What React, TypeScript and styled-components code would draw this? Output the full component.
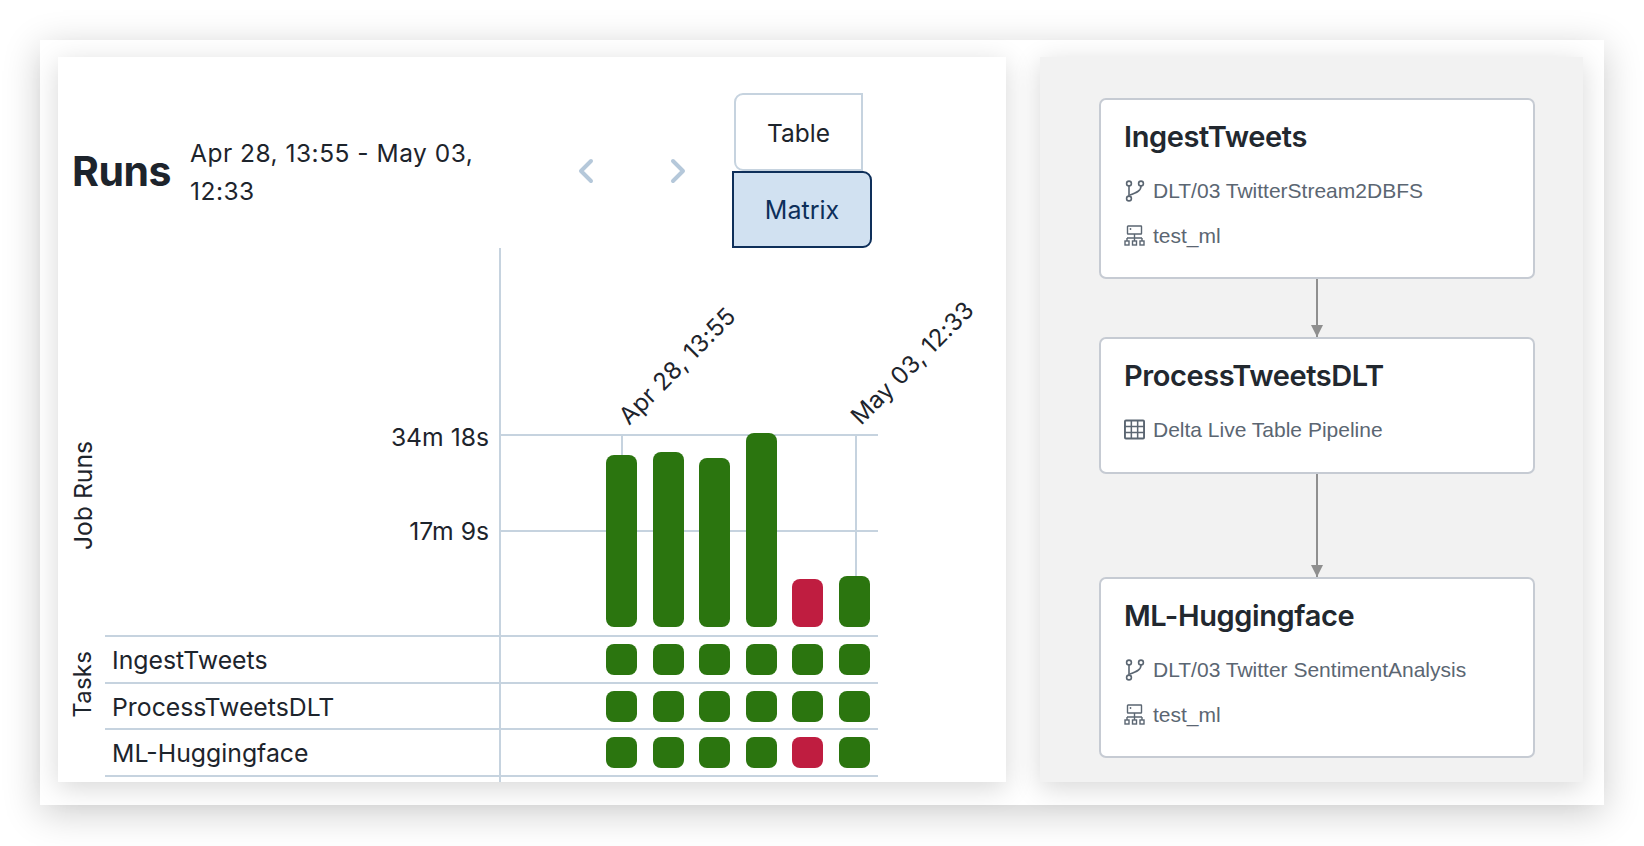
import React from "react";
import styled, { createGlobalStyle } from "styled-components";
import { ChevronLeft, ChevronRight } from "lucide-react";

const Global = createGlobalStyle`
  html, body { margin: 0; padding: 0; background: #fff; overflow: hidden; }
  body { font-family: Inter, "Liberation Sans", sans-serif; color: #1d242c; }
`;

const Page = styled.div`
  width: 1644px;
  height: 846px;
  box-sizing: border-box;
  padding: 40px;
`;

const Frame = styled.div`
  width: 1564px;
  height: 765px;
  box-sizing: border-box;
  background: #fff;
  padding: 17px 21px 23px 18px;
  display: flex;
  gap: 34px;
  box-shadow: 0 8px 36px rgba(0, 0, 0, 0.2);
`;

const RunsPanel = styled.section`
  width: 948px;
  height: 725px;
  background: #fff;
  overflow: hidden;
  flex: none;
  box-shadow: 0 6px 26px rgba(0, 0, 0, 0.16);
  position: relative;
  z-index: 1;
`;

const Header = styled.header`
  height: 191px;
  box-sizing: border-box;
  padding: 36px 0 0 14px;
  display: flex;
  align-items: center;
`;

const Title = styled.h1`
  margin: 0;
  font-size: 41px;
  font-weight: 700;
  letter-spacing: -0.5px;
  width: 97px;
  flex: none;
  white-space: nowrap;
`;

const DateRange = styled.div`
  margin: 2px 30px 0 21px;
  width: 320px;
  flex: none;
  font-size: 24.5px;
  letter-spacing: 0.5px;
  line-height: 38px;
`;

const NavButton = styled.div`
  width: 92px;
  height: 40px;
  flex: none;
  display: flex;
  justify-content: center;
  color: #b5c8da;
`;

const Toggle = styled.div`
  margin-left: 9px;
  display: flex;
  flex-direction: column;
  align-items: flex-start;
`;

const TableButton = styled.div`
  width: 129px;
  height: 78px;
  margin-left: 1px;
  padding-top: 2px;
  box-sizing: border-box;
  border: 2px solid #c6d3df;
  border-radius: 9px 0 0 9px;
  display: flex;
  align-items: center;
  justify-content: center;
  font-size: 24.5px;
`;

const MatrixButton = styled.div`
  width: 140px;
  margin-left: -1px;
  height: 77px;
  box-sizing: border-box;
  border: 2px solid #0e2f5a;
  border-radius: 0 9px 9px 0;
  background: #d1e1f1;
  color: #0e2f5a;
  display: flex;
  align-items: center;
  justify-content: center;
  font-size: 25px;
`;

const Chart = styled.div`
  position: relative;
  width: 820px;
  &::before {
    content: "";
    position: absolute;
    left: 441px;
    top: 0;
    height: 534px;
    width: 2px;
    background: #c6d3df;
  }
`;

const BarsSection = styled.div`
  display: grid;
  grid-template-columns: 47px 395px 378px;
  height: 387px;
`;

const AxisTitle = styled.div`
  writing-mode: vertical-rl;
  transform: rotate(180deg);
  font-size: 24px;
  line-height: 30px;
  justify-self: center;
  white-space: nowrap;
`;

const JobRunsTitle = styled(AxisTitle)`
  align-self: end;
  font-size: 24.7px;
  margin-bottom: 85px;
  margin-left: 3px;
`;

const TasksTitle = styled(AxisTitle)`
  align-self: start;
  margin-top: 16px;
  margin-left: 3px;
  letter-spacing: 0.2px;
`;

const YAxis = styled.div`
  position: relative;
`;

const YLabel = styled.span<{ $top: number }>`
  position: absolute;
  right: 11px;
  top: ${(p) => p.$top}px;
  font-size: 24.7px;
  line-height: 30px;
  white-space: nowrap;
`;

const Plot = styled.div`
  position: relative;
  display: flex;
  align-items: flex-end;
  gap: 15.5px;
  padding: 0 0 8px 106px;
`;

const GridLine = styled.div<{ $top: number }>`
  position: absolute;
  left: 0;
  right: 0;
  top: ${(p) => p.$top}px;
  height: 2px;
  background: #c6d3df;
`;

const Tick = styled.div<{ $left: number; $height: number }>`
  position: absolute;
  left: ${(p) => p.$left}px;
  top: 186px;
  width: 2px;
  height: ${(p) => p.$height}px;
  background: #c6d3df;
`;

const TimeLabel = styled.span<{ $left: number }>`
  position: absolute;
  left: ${(p) => p.$left}px;
  top: 153px;
  line-height: 30px;
  font-size: 24px;
  letter-spacing: 0.2px;
  white-space: nowrap;
  transform-origin: 0 100%;
  transform: rotate(-45deg);
`;

const Bar = styled.div<{ $height: number; $failed?: boolean }>`
  position: relative;
  width: 31px;
  flex: none;
  height: ${(p) => p.$height}px;
  border-radius: 8px;
  background: ${(p) => (p.$failed ? "#bf1d40" : "#2b750f")};
`;

const TasksSection = styled.div`
  display: grid;
  grid-template-columns: 47px 773px;
`;

const TaskTable = styled.div`
  border-top: 2px solid #c6d3df;
`;

const TaskRow = styled.div`
  display: grid;
  grid-template-columns: 395px 378px;
  height: 46.67px;
  box-sizing: border-box;
  border-bottom: 2px solid #c6d3df;
`;

const TaskName = styled.div`
  padding-left: 7px;
  font-size: 24.8px;
  line-height: 47px;
`;

const TaskCells = styled.div`
  display: flex;
  align-items: center;
  gap: 15.5px;
  padding: 0 0 2px 106px;
`;

const Cell = styled.div<{ $failed?: boolean }>`
  width: 31px;
  height: 31px;
  flex: none;
  border-radius: 8px;
  background: ${(p) => (p.$failed ? "#bf1d40" : "#2b750f")};
`;

const DagPanel = styled.section`
  width: 543px;
  height: 725px;
  flex: none;
  box-sizing: border-box;
  background: #f2f2f2;
  padding: 41px 48px 0 59px;
  display: flex;
  flex-direction: column;
  box-shadow: 0 6px 26px rgba(0, 0, 0, 0.16);
`;

const Card = styled.article<{ $height: number }>`
  height: ${(p) => p.$height}px;
  box-sizing: border-box;
  background: #fff;
  border: 2px solid #c6cbd3;
  border-radius: 7px;
  padding: 19px 23px 0;
  flex: none;
`;

const CardTitle = styled.h2`
  margin: 0 0 13px;
  font-size: 29px;
  line-height: 36px;
  font-weight: 600;
  color: #22282f;
  letter-spacing: -0.4px;
`;

const CardLine = styled.div`
  display: flex;
  align-items: center;
  gap: 8px;
  height: 45px;
  color: #5b6672;
  font-family: "Liberation Sans", Arial, sans-serif;
  font-size: 21px;
  white-space: nowrap;
`;

const IconBox = styled.span`
  width: 21px;
  height: 22px;
  flex: none;
  display: flex;
  align-items: center;
  justify-content: center;
`;

const Connector = styled.div<{ $height: number }>`
  height: ${(p) => p.$height}px;
  flex: none;
  display: flex;
  justify-content: center;
  margin-right: 1px;
`;

const BranchIcon = () => (
  <svg width="21" height="22" viewBox="0 0 21 22" fill="none" stroke="currentColor" strokeWidth="1.6">
    <circle cx="5" cy="3.5" r="2.4" />
    <circle cx="5" cy="18.5" r="2.4" />
    <circle cx="17" cy="3.5" r="2.4" />
    <path d="M5 6v10M17 6c0 4.5-4 6.5-11 9" />
  </svg>
);

const ClusterIcon = () => (
  <svg width="21" height="21" viewBox="0 0 21 21" fill="none" stroke="currentColor" strokeWidth="1.4">
    <rect x="3.5" y="1" width="14" height="8" rx="0.5" />
    <path d="M10.5 9v4M3 13h15M3 13v3M10.5 13v3M18 13v3" />
    <rect x="1" y="16" width="4" height="4" />
    <rect x="8.5" y="16" width="4" height="4" />
    <rect x="16" y="16" width="4" height="4" />
    <circle cx="6.5" cy="4" r="0.9" fill="currentColor" stroke="none" />
  </svg>
);

const TableIcon = () => (
  <svg width="22" height="21" viewBox="0 0 22 21" fill="none" stroke="currentColor" strokeWidth="1.6">
    <rect x="1" y="1" width="20" height="19" rx="1" strokeWidth="2" />
    <path d="M1 7.3h20M1 13.6h20M7.7 1v19M14.3 1v19" />
  </svg>
);

const Arrow = () => (
  <svg width="16" height="100%" fill="none">
    <line x1="8" y1="0" x2="8" y2="100%" stroke="#8f8f8f" strokeWidth="2" />
    <svg x="0" y="100%" overflow="visible">
      <path d="M2 -12 H14 L8 0 Z" fill="#8f8f8f" />
    </svg>
  </svg>
);

const bars = [
  { h: 172 },
  { h: 175 },
  { h: 169 },
  { h: 194 },
  { h: 48, failed: true },
  { h: 51 },
];

const tasks = [
  { name: "IngestTweets", failed: -1 },
  { name: "ProcessTweetsDLT", failed: -1 },
  { name: "ML-Huggingface", failed: 4 },
];

export default function App() {
  return (
    <Page>
      <Global />
      <Frame>
        <RunsPanel>
          <Header>
            <Title>Runs</Title>
            <DateRange>Apr 28, 13:55 - May 03, 12:33</DateRange>
            <NavButton>
              <ChevronLeft size={40} strokeWidth={2.4} />
            </NavButton>
            <NavButton>
              <ChevronRight size={40} strokeWidth={2.4} />
            </NavButton>
            <Toggle>
              <TableButton>Table</TableButton>
              <MatrixButton>Matrix</MatrixButton>
            </Toggle>
          </Header>
          <Chart>
            <BarsSection>
              <JobRunsTitle>Job Runs</JobRunsTitle>
              <YAxis>
                <YLabel $top={174}>34m 18s</YLabel>
                <YLabel $top={268}>17m 9s</YLabel>
              </YAxis>
              <Plot>
                <GridLine $top={186} />
                <GridLine $top={282} />
                <Tick $left={121} $height={30} />
                <Tick $left={355} $height={150} />
                <TimeLabel $left={134}>Apr 28, 13:55</TimeLabel>
                <TimeLabel $left={366}>May 03, 12:33</TimeLabel>
                {bars.map((b, i) => (
                  <Bar key={i} $height={b.h} $failed={b.failed} />
                ))}
              </Plot>
            </BarsSection>
            <TasksSection>
              <TasksTitle>Tasks</TasksTitle>
              <TaskTable>
                {tasks.map((t) => (
                  <TaskRow key={t.name}>
                    <TaskName>{t.name}</TaskName>
                    <TaskCells>
                      {bars.map((_, i) => (
                        <Cell key={i} $failed={i === t.failed} />
                      ))}
                    </TaskCells>
                  </TaskRow>
                ))}
              </TaskTable>
            </TasksSection>
          </Chart>
        </RunsPanel>
        <DagPanel>
          <Card $height={181}>
            <CardTitle>IngestTweets</CardTitle>
            <CardLine>
              <IconBox><BranchIcon /></IconBox>
              DLT/03 TwitterStream2DBFS
            </CardLine>
            <CardLine>
              <IconBox><ClusterIcon /></IconBox>
              test_ml
            </CardLine>
          </Card>
          <Connector $height={58}><Arrow /></Connector>
          <Card $height={137}>
            <CardTitle>ProcessTweetsDLT</CardTitle>
            <CardLine>
              <IconBox><TableIcon /></IconBox>
              Delta Live Table Pipeline
            </CardLine>
          </Card>
          <Connector $height={103}><Arrow /></Connector>
          <Card $height={181}>
            <CardTitle>ML-Huggingface</CardTitle>
            <CardLine>
              <IconBox><BranchIcon /></IconBox>
              DLT/03 Twitter SentimentAnalysis
            </CardLine>
            <CardLine>
              <IconBox><ClusterIcon /></IconBox>
              test_ml
            </CardLine>
          </Card>
        </DagPanel>
      </Frame>
    </Page>
  );
}
